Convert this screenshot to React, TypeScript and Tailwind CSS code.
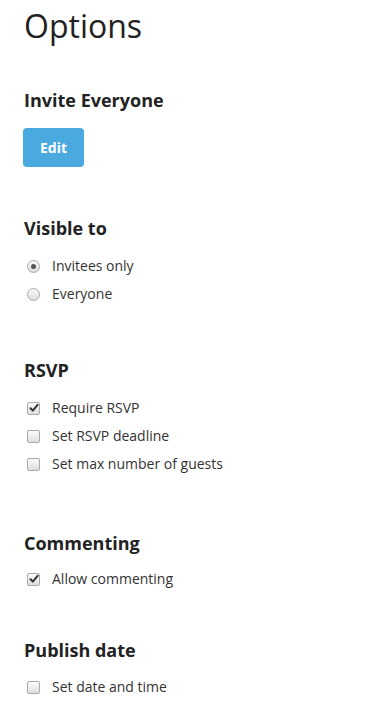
import React from "react";

const font = { fontFamily: '"Open Sans", "Liberation Sans", sans-serif' };

function Check({ checked }: { checked?: boolean }) {
  return (
    <span className="relative flex h-[13px] w-[13px] items-center justify-center rounded-[2px] border border-[#a9a9a9] bg-gradient-to-b from-[#fcfcfc] to-[#dedede]">
      {checked && (
        <svg width="10" height="10" viewBox="0 0 10 10" className="absolute">
          <path d="M1.5 5.2 L3.8 7.6 L8.6 1.8" fill="none" stroke="#333" strokeWidth="2" strokeLinecap="round" strokeLinejoin="round" />
        </svg>
      )}
    </span>
  );
}

function Radio({ checked }: { checked?: boolean }) {
  return (
    <span className="flex h-[13px] w-[13px] items-center justify-center rounded-full border border-[#a9a9a9] bg-gradient-to-b from-[#fcfcfc] to-[#dcdcdc]">
      {checked && <span className="h-[5px] w-[5px] rounded-full bg-[#555]" />}
    </span>
  );
}

function Row({ children, control }: { children: React.ReactNode; control: React.ReactNode }) {
  return (
    <div className="flex h-[28px] items-center">
      <span className="ml-[3px] mr-[12px] flex w-[13px] items-center">{control}</span>
      <span className="text-[14px] leading-[20px] text-[#333]">{children}</span>
    </div>
  );
}

function Heading({ children }: { children: React.ReactNode }) {
  return <h2 className="text-[18px] font-bold leading-[24px] text-[#222]">{children}</h2>;
}

export default function App() {
  return (
    <div style={font} className="min-h-[723px] bg-white pl-[24px] pt-[6px]">
      <h1 className="text-[32px] font-normal leading-[40px] text-[#222]">Options</h1>

      <section className="mt-[42px]">
        <Heading>Invite Everyone</Heading>
        <button className="mt-[16px] flex h-[39px] w-[61px] items-center justify-center rounded-[4px] bg-[#4aa9df] text-[14px] font-bold text-white -ml-[1px]">
          Edit
        </button>
      </section>

      <section className="mt-[49px]">
        <Heading>Visible to</Heading>
        <div className="mt-[12px]">
          <Row control={<Radio checked />}>Invitees only</Row>
          <Row control={<Radio />}>Everyone</Row>
        </div>
      </section>

      <section className="mt-[50px]">
        <Heading>RSVP</Heading>
        <div className="mt-[12px]">
          <Row control={<Check checked />}>Require RSVP</Row>
          <Row control={<Check />}>Set RSVP deadline</Row>
          <Row control={<Check />}>Set max number of guests</Row>
        </div>
      </section>

      <section className="mt-[53px]">
        <Heading>Commenting</Heading>
        <div className="mt-[10px]">
          <Row control={<Check checked />}>Allow commenting</Row>
        </div>
      </section>

      <section className="mt-[45px]">
        <Heading>Publish date</Heading>
        <div className="mt-[11px]">
          <Row control={<Check />}>Set date and time</Row>
        </div>
      </section>
    </div>
  );
}
